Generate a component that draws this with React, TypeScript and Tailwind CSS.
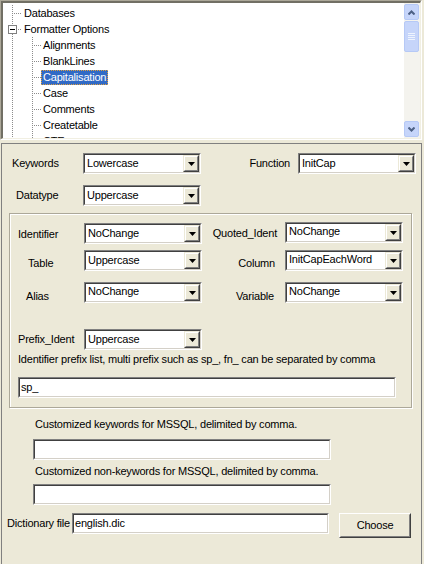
import React from 'react';

const FONT = { fontFamily: '"Liberation Sans", Arial, sans-serif' };

// classic sunken 2px frame
const Sunken: React.FC<{ className?: string; children?: React.ReactNode }> = ({ className = '', children }) => (
  <div className={`border border-t-[#808080] border-l-[#808080] border-r-white border-b-white ${className}`}>
    <div className="h-full w-full border border-t-[#404040] border-l-[#404040] border-r-[#D4D0C8] border-b-[#D4D0C8] bg-white">
      {children}
    </div>
  </div>
);

const Combo: React.FC<{ value: string; top?: boolean }> = ({ value, top }) => (
  <Sunken className="h-[21px] w-[118px] shrink-0">
    <div className="flex h-full">
      <div className={`flex flex-1 pl-[2px] leading-[13px] ${top ? 'items-start pt-[1px]' : 'items-center'}`}>{value}</div>
      <div className="h-full w-[16px] border border-t-[#ECE9D8] border-l-[#ECE9D8] border-r-[#404040] border-b-[#404040]">
        <div className="flex h-full w-full items-center justify-center border border-t-white border-l-white border-r-[#808080] border-b-[#808080] bg-[#ECE9D8]">
          <svg width="7" height="4" viewBox="0 0 7 4">
            <path d="M0 0h7L3.5 4z" fill="#000" />
          </svg>
        </div>
      </div>
    </div>
  </Sunken>
);

const TextBox: React.FC<{ value?: string; w: string }> = ({ value = '', w }) => (
  <Sunken className={`h-[21px] shrink-0 ${w}`}>
    <div className="flex h-full items-center pl-[1px] leading-[13px]">{value}</div>
  </Sunken>
);

const treeItems = [
  { label: 'Databases', depth: 0 },
  { label: 'Formatter Options', depth: 0 },
  { label: 'Alignments', depth: 1 },
  { label: 'BlankLines', depth: 1 },
  { label: 'Capitalisation', depth: 1, selected: true },
  { label: 'Case', depth: 1 },
  { label: 'Comments', depth: 1 },
  { label: 'Createtable', depth: 1 },
  { label: 'CTE', depth: 1 },
];

// connector lines, drawn in page coordinates
const TreeLines = () => (
  <svg className="absolute left-[-3px] top-[-3px]" width="60" height="146" viewBox="0 0 60 146">
    <g stroke="#8C8C8C" strokeDasharray="1 1" shapeRendering="crispEdges">
      <line x1="12.5" y1="5" x2="12.5" y2="25" />
      <line x1="12.5" y1="34" x2="12.5" y2="146" />
      <line x1="14" y1="13.5" x2="22" y2="13.5" />
      <line x1="18" y1="29.5" x2="22" y2="29.5" />
      <line x1="32.5" y1="37" x2="32.5" y2="146" />
      {[45, 61, 77, 93, 109, 125, 141].map((y) => (
        <line key={y} x1="34" y1={y + 0.5} x2="41" y2={y + 0.5} />
      ))}
    </g>
    <rect x="8.5" y="25.5" width="8" height="8" fill="#fff" stroke="#808080" shapeRendering="crispEdges" />
    <line x1="10" y1="29.5" x2="15" y2="29.5" stroke="#000" shapeRendering="crispEdges" />
  </svg>
);

const ScrollArrow: React.FC<{ up?: boolean }> = ({ up }) => (
  <div className="flex h-[16px] w-[15px] items-center justify-center rounded-[2px] border border-[#B6C9F6] bg-[#C6D5FA]">
    <svg width="7" height="5" viewBox="0 0 7 5">
      <path d={up ? 'M0.5 4.5L3.5 1.5L6.5 4.5' : 'M0.5 0.5L3.5 3.5L6.5 0.5'} stroke="#4D6185" strokeWidth="2" fill="none" />
    </svg>
  </div>
);

const App: React.FC = () => {
  return (
    <div style={FONT} className="h-[564px] w-[424px] overflow-hidden bg-[#ECE9D8] text-[11px] tracking-[-0.2px] text-black">
      {/* ── Tree view ── */}
      <div className="h-[140px] w-[422px] border-t border-l border-t-[#ACA899] border-l-[#ACA899] border-r border-b border-r-white border-b-white">
        <div className="flex h-full w-full border-t-2 border-l-2 border-t-[#716F64] border-l-[#716F64] border-r border-b border-r-[#F1EFE2] border-b-[#F1EFE2] bg-white">
          <div className="relative flex-1 overflow-hidden">
            <TreeLines />
            <div className="relative pt-[2px]">
              {treeItems.map((it) => (
                <div
                  key={it.label}
                  className={`flex h-[16px] items-center ${it.depth === 0 ? 'pl-[19px]' : 'pl-[38px]'}`}
                >
                  {it.selected ? (
                    <span className="flex h-[15px] items-center border border-dotted border-[#E0A040] bg-[#316AC5] px-[1px] leading-[13px] text-white">
                      {it.label}
                    </span>
                  ) : (
                    <span className="px-[2px] leading-[13px]">{it.label}</span>
                  )}
                </div>
              ))}
            </div>
          </div>
          {/* scrollbar */}
          <div className="flex w-[16px] flex-col bg-[#F4F3EE] pt-[1px] pb-[1px]">
            <ScrollArrow up />
            <div className="mt-[1px] flex h-[31px] w-[15px] items-center justify-center rounded-[2px] border border-[#B6C9F6] bg-[#C6D5FA]">
              <div className="flex flex-col gap-[1px]">
                {[0, 1, 2, 3].map((i) => (
                  <div key={i} className="h-px w-[7px] bg-[#EEF4FE]" />
                ))}
              </div>
            </div>
            <div className="flex-1" />
            <ScrollArrow />
          </div>
        </div>
      </div>

      {/* ── Options panel ── */}
      <div className="mt-[3px] ml-[1px] h-[430px] w-[421px] border-t border-l border-r border-[#808080] leading-[13px]">
        {/* Keywords / Function */}
        <div className="mt-[9px] flex items-start">
          <div className="mt-[4px] w-[81px] pl-[10px]">Keywords</div>
          <Combo value="Lowercase" />
          <div className="mt-[4px] w-[97px] pr-[8px] text-right">Function</div>
          <Combo value="InitCap" />
        </div>
        {/* Datatype */}
        <div className="mt-[11px] flex items-start">
          <div className="mt-[4px] w-[81px] pl-[14px]">Datatype</div>
          <Combo value="Uppercase" />
        </div>

        {/* Group box */}
        <div className="mt-[7px] ml-[7px] h-[195px] w-[403px] border border-[#ACA899] shadow-[inset_1px_1px_0_#fff,1px_1px_0_#fff]">
          <div className="mt-[9px] flex h-[21px] items-start">
            <div className="mt-[5px] w-[74px] pl-[8px]">Identifier</div>
            <Combo value="NoChange" />
            <div className="mt-[4px] w-[83px] pr-[8px] text-right">Quoted_Ident</div>
            <div className="-mt-[1px]">
              <Combo value="NoChange" top />
            </div>
          </div>
          <div className="mt-[6px] flex h-[21px] items-start">
            <div className="mt-[7px] w-[74px] pl-[18px]">Table</div>
            <Combo value="Uppercase" />
            <div className="mt-[7px] w-[83px] pr-[10px] text-right">Column</div>
            <Combo value="InitCapEachWord" top />
          </div>
          <div className="mt-[11px] flex h-[21px] items-start">
            <div className="mt-[8px] w-[74px] pl-[16px]">Alias</div>
            <Combo value="NoChange" top />
            <div className="mt-[8px] w-[83px] pr-[11px] text-right">Variable</div>
            <Combo value="NoChange" top />
          </div>
          <div className="mt-[26px] flex h-[21px] items-start">
            <div className="mt-[4px] w-[74px] pl-[8px]">Prefix_Ident</div>
            <Combo value="Uppercase" />
          </div>
          <div className="mt-[3px] pl-[8px]">
            Identifier prefix list, multi prefix such as sp_, fn_ can be separated by comma
          </div>
          <div className="mt-[11px] ml-[8px]">
            <TextBox value="sp_" w="w-[378px]" />
          </div>
        </div>

        <div className="mt-[10px] pl-[33px]">Customized keywords for MSSQL, delimited by comma.</div>
        <div className="mt-[8px] ml-[31px]">
          <TextBox w="w-[298px]" />
        </div>
        <div className="mt-[5px] pl-[33px]">Customized non-keywords for MSSQL, delimited by comma.</div>
        <div className="mt-[6px] ml-[31px]">
          <TextBox w="w-[298px]" />
        </div>

        {/* Dictionary */}
        <div className="mt-[8px] flex items-start">
          <div className="mt-[4px] w-[70px] whitespace-nowrap pl-[5px]">Dictionary file</div>
          <TextBox value="english.dic" w="w-[257px]" />
          <button className="ml-[10px] h-[25px] w-[72px] border border-t-white border-l-white border-r-[#404040] border-b-[#404040] bg-[#ECE9D8] p-0">
            <div className="flex h-full w-full items-center justify-center border border-t-[#ECE9D8] border-l-[#ECE9D8] border-r-[#808080] border-b-[#808080]">
              Choose
            </div>
          </button>
        </div>
      </div>
    </div>
  );
};

export default App;
